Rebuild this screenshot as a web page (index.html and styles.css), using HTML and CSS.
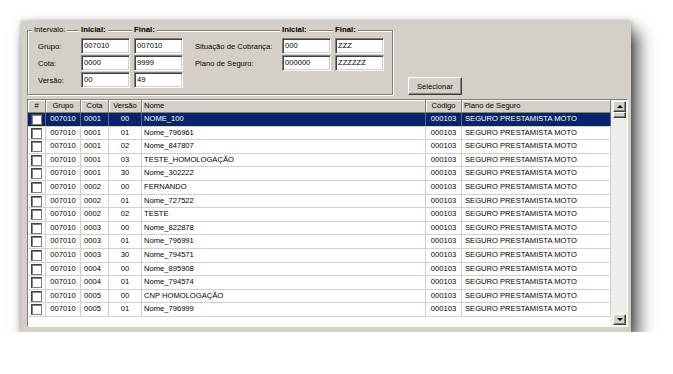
FILE: index.html
```html
<!doctype html>
<html>

<head>
    <meta charset="utf-8" />
    <title>Seleção de cotas</title>
    <link rel="stylesheet" href="styles.css">
</head>

<body>
    <div class="window">
        <div class="top">
            <div class="frame">
                <span class="head head--first">Intervalo:</span>
                <b class="head">Inicial:</b>
                <b class="head">Final:</b>
                <span></span>
                <b class="head">Inicial:</b>
                <b class="head">Final:</b>

                <span class="lbl">Grupo:</span>
                <div class="field">007010</div>
                <div class="field">007010</div>
                <span class="lbl lbl--2">Situação de Cobrança:</span>
                <div class="field">000</div>
                <div class="field">ZZZ</div>

                <span class="lbl">Cota:</span>
                <div class="field">0000</div>
                <div class="field">9999</div>
                <span class="lbl lbl--2">Plano de Seguro:</span>
                <div class="field">000000</div>
                <div class="field">ZZZZZZ</div>

                <span class="lbl">Versão:</span>
                <div class="field">00</div>
                <div class="field">49</div>
            </div>
            <button class="btn">Selecionar</button>
        </div>

        <div class="list">
            <div class="grid">
                <div class="row row--head">
                    <div class="c c--mid">#</div>
                    <div class="c c--mid">Grupo</div>
                    <div class="c c--mid">Cota</div>
                    <div class="c c--mid">Versão</div>
                    <div class="c">Nome</div>
                    <div class="c c--mid">Código</div>
                    <div class="c">Plano de Seguro</div>
                </div>
                <div class="row row--sel">
                    <div class="c c--mid"><i class="chk"></i></div>
                    <div class="c c--mid">007010</div><div class="c c--pad">0001</div><div class="c c--mid">00</div>
                    <div class="c">NOME_100</div><div class="c c--mid">000103</div><div class="c c--pad">SEGURO PRESTAMISTA MOTO</div>
                </div>
                <div class="row">
                    <div class="c c--mid"><i class="chk"></i></div>
                    <div class="c c--mid">007010</div><div class="c c--pad">0001</div><div class="c c--mid">01</div>
                    <div class="c">Nome_796961</div><div class="c c--mid">000103</div><div class="c c--pad">SEGURO PRESTAMISTA MOTO</div>
                </div>
                <div class="row">
                    <div class="c c--mid"><i class="chk"></i></div>
                    <div class="c c--mid">007010</div><div class="c c--pad">0001</div><div class="c c--mid">02</div>
                    <div class="c">Nome_847807</div><div class="c c--mid">000103</div><div class="c c--pad">SEGURO PRESTAMISTA MOTO</div>
                </div>
                <div class="row">
                    <div class="c c--mid"><i class="chk"></i></div>
                    <div class="c c--mid">007010</div><div class="c c--pad">0001</div><div class="c c--mid">03</div>
                    <div class="c">TESTE_HOMOLOGAÇÃO</div><div class="c c--mid">000103</div><div class="c c--pad">SEGURO PRESTAMISTA MOTO</div>
                </div>
                <div class="row">
                    <div class="c c--mid"><i class="chk"></i></div>
                    <div class="c c--mid">007010</div><div class="c c--pad">0001</div><div class="c c--mid">30</div>
                    <div class="c">Nome_302222</div><div class="c c--mid">000103</div><div class="c c--pad">SEGURO PRESTAMISTA MOTO</div>
                </div>
                <div class="row">
                    <div class="c c--mid"><i class="chk"></i></div>
                    <div class="c c--mid">007010</div><div class="c c--pad">0002</div><div class="c c--mid">00</div>
                    <div class="c">FERNANDO</div><div class="c c--mid">000103</div><div class="c c--pad">SEGURO PRESTAMISTA MOTO</div>
                </div>
                <div class="row">
                    <div class="c c--mid"><i class="chk"></i></div>
                    <div class="c c--mid">007010</div><div class="c c--pad">0002</div><div class="c c--mid">01</div>
                    <div class="c">Nome_727522</div><div class="c c--mid">000103</div><div class="c c--pad">SEGURO PRESTAMISTA MOTO</div>
                </div>
                <div class="row">
                    <div class="c c--mid"><i class="chk"></i></div>
                    <div class="c c--mid">007010</div><div class="c c--pad">0002</div><div class="c c--mid">02</div>
                    <div class="c">TESTE</div><div class="c c--mid">000103</div><div class="c c--pad">SEGURO PRESTAMISTA MOTO</div>
                </div>
                <div class="row">
                    <div class="c c--mid"><i class="chk"></i></div>
                    <div class="c c--mid">007010</div><div class="c c--pad">0003</div><div class="c c--mid">00</div>
                    <div class="c">Nome_822878</div><div class="c c--mid">000103</div><div class="c c--pad">SEGURO PRESTAMISTA MOTO</div>
                </div>
                <div class="row">
                    <div class="c c--mid"><i class="chk"></i></div>
                    <div class="c c--mid">007010</div><div class="c c--pad">0003</div><div class="c c--mid">01</div>
                    <div class="c">Nome_796991</div><div class="c c--mid">000103</div><div class="c c--pad">SEGURO PRESTAMISTA MOTO</div>
                </div>
                <div class="row">
                    <div class="c c--mid"><i class="chk"></i></div>
                    <div class="c c--mid">007010</div><div class="c c--pad">0003</div><div class="c c--mid">30</div>
                    <div class="c">Nome_794571</div><div class="c c--mid">000103</div><div class="c c--pad">SEGURO PRESTAMISTA MOTO</div>
                </div>
                <div class="row">
                    <div class="c c--mid"><i class="chk"></i></div>
                    <div class="c c--mid">007010</div><div class="c c--pad">0004</div><div class="c c--mid">00</div>
                    <div class="c">Nome_895908</div><div class="c c--mid">000103</div><div class="c c--pad">SEGURO PRESTAMISTA MOTO</div>
                </div>
                <div class="row">
                    <div class="c c--mid"><i class="chk"></i></div>
                    <div class="c c--mid">007010</div><div class="c c--pad">0004</div><div class="c c--mid">01</div>
                    <div class="c">Nome_794574</div><div class="c c--mid">000103</div><div class="c c--pad">SEGURO PRESTAMISTA MOTO</div>
                </div>
                <div class="row">
                    <div class="c c--mid"><i class="chk"></i></div>
                    <div class="c c--mid">007010</div><div class="c c--pad">0005</div><div class="c c--mid">00</div>
                    <div class="c">CNP HOMOLOGAÇÃO</div><div class="c c--mid">000103</div><div class="c c--pad">SEGURO PRESTAMISTA MOTO</div>
                </div>
                <div class="row">
                    <div class="c c--mid"><i class="chk"></i></div>
                    <div class="c c--mid">007010</div><div class="c c--pad">0005</div><div class="c c--mid">01</div>
                    <div class="c">Nome_796999</div><div class="c c--mid">000103</div><div class="c c--pad">SEGURO PRESTAMISTA MOTO</div>
                </div>
            </div>
            <div class="vscroll">
                <div class="sb-btn"><i class="tri tri--up"></i></div>
                <div class="sb-thumb"></div>
                <div class="sb-btn sb-btn--down"><i class="tri tri--down"></i></div>
            </div>
        </div>
    </div>
</body>

</html>
```

FILE: styles.css
```css
body {
    margin: 0;
    background: #fff;
    font-family: "Liberation Sans", Arial, sans-serif;
    font-size: 7.6px;
    color: #000;
}

.window {
    display: flex;
    flex-direction: column;
    box-sizing: border-box;
    width: 610px;
    height: 311px;
    margin: 21px 0 0 21px;
    padding: 9px 3px 5px 6px;
    background: #d4d0c8;
    box-shadow: 7px 10px 16px rgba(0, 0, 0, .7), 0 0 5px rgba(0, 0, 0, .3);
}

.top {
    display: flex;
}

/* etched group box */
.frame {
    display: grid;
    grid-template-columns: 39px 49px 49px 91px 49px 49px;
    grid-template-rows: 6px 16px 16px 16px;
    column-gap: 4px;
    row-gap: 1px;
    align-items: center;
    padding: 0 8px 6px 10px;
    border: 1px solid #808080;
    box-shadow: inset 1px 1px #fff, 1px 1px #fff;
}

.head {
    align-self: start;
    justify-self: start;
    margin: -6px 0 0 -2px;
    padding: 0 2px;
    line-height: 10px;
    background: #d4d0c8;
}

.head--first {
    margin-left: -6px;
}

b.head {
    font-size: 7.8px;
}

.lbl {
    white-space: nowrap;
}

.lbl--2 {
    padding-left: 8px;
}

.field {
    box-sizing: border-box;
    height: 16px;
    padding: 0 2px;
    line-height: 14px;
    background: #fff;
    border: 1px solid;
    border-color: #808080 #fff #fff #808080;
    box-shadow: inset 1px 1px #404040, inset -1px -1px #d4d0c8;
}

.btn {
    align-self: flex-end;
    box-sizing: border-box;
    width: 54px;
    height: 18px;
    margin-left: 15px;
    padding: 0;
    font: inherit;
    color: #000;
    background: #d4d0c8;
    border: 1px solid;
    border-color: #fff #404040 #404040 #fff;
    box-shadow: inset -1px -1px #808080;
}

/* list view */
.list {
    display: flex;
    flex: 1;
    margin-top: 4px;
    background: #fff;
    border: 1px solid;
    border-color: #808080 #fff #fff #808080;
}

.grid {
    width: 583px;
}

.row {
    display: grid;
    grid-template-columns: 18px 35px 28px 33px 284px 36px 1fr;
    box-sizing: border-box;
    height: 13.6px;
    border-bottom: 1px solid #d4d0c8;
}

.c {
    overflow: hidden;
    padding-left: 2px;
    white-space: nowrap;
    line-height: 12.6px;
    border-right: 1px solid #d4d0c8;
}

.c--mid {
    padding: 0;
    text-align: center;
}

.c--pad {
    padding-left: 3px;
}

.row--head {
    height: 13px;
    background: #d4d0c8;
    border-bottom: 1px solid #808080;
}

.row--head .c {
    line-height: 12px;
    border-right-color: #808080;
    box-shadow: inset 1px 1px #fff;
}

.row--sel {
    color: #fff;
    background: #0a246a;
}

.row--sel .c {
    border-right-color: rgba(255, 255, 255, .3);
}

.chk {
    display: inline-block;
    box-sizing: border-box;
    width: 11px;
    height: 11px;
    margin-top: 1px;
    vertical-align: top;
    background: #fff;
    border: 1px solid;
    border-color: #404040 #808080 #808080 #404040;
    box-shadow: inset 1px 1px #808080;
}

.vscroll {
    display: flex;
    flex-direction: column;
    flex: 1;
    padding: 1px 1px 1px 2px;
    background: #eeede9;
}

.sb-btn,
.sb-thumb {
    box-sizing: border-box;
    background: #d4d0c8;
    border: 1px solid;
    border-color: #fff #404040 #404040 #fff;
    box-shadow: inset -1px -1px #808080;
}

.sb-btn {
    display: flex;
    align-items: center;
    justify-content: center;
    height: 11px;
}

.sb-btn--down {
    margin-top: auto;
}

.sb-thumb {
    height: 6px;
}

.tri {
    width: 0;
    height: 0;
    border-left: 3px solid transparent;
    border-right: 3px solid transparent;
}

.tri--up {
    border-bottom: 3px solid #000;
}

.tri--down {
    border-top: 3px solid #000;
}
```
